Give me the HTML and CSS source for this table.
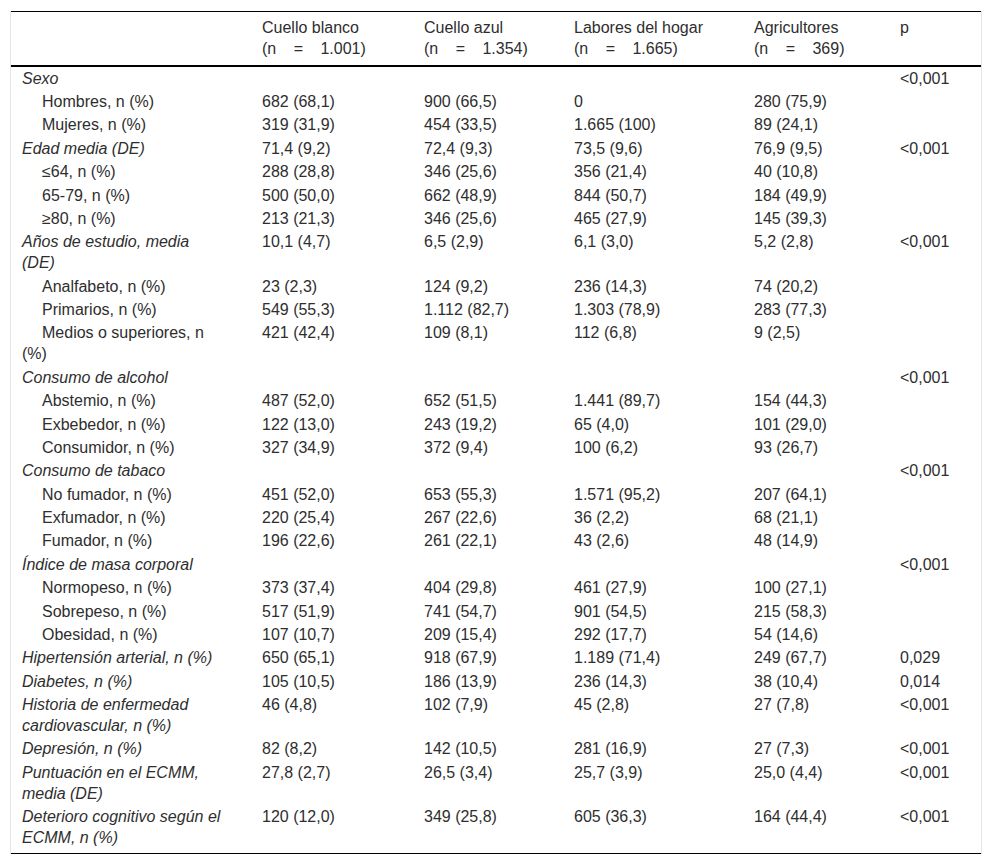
FILE: index.html
```html
<!DOCTYPE html>
<html lang="es">
<head>
<meta charset="utf-8">
<title>Tabla</title>
<link rel="stylesheet" href="styles.css">
</head>
<body>
<div class="wrap">
<table class="tbl">
<colgroup>
<col class="c1"><col class="c2"><col class="c3"><col class="c4"><col class="c5"><col class="c6">
</colgroup>
<thead>
<tr>
<th></th>
<th>Cuello blanco<br><span class="nn">(n = 1.001)</span></th>
<th>Cuello azul<br><span class="nn">(n = 1.354)</span></th>
<th>Labores del hogar<br><span class="nn">(n = 1.665)</span></th>
<th>Agricultores<br><span class="nn">(n = 369)</span></th>
<th>p</th>
</tr>
</thead>
<tbody>
<tr><td class="g">Sexo</td><td></td><td></td><td></td><td></td><td>&lt;0,001</td></tr>
<tr><td class="s">Hombres, n (%)</td><td>682 (68,1)</td><td>900 (66,5)</td><td>0</td><td>280 (75,9)</td><td></td></tr>
<tr><td class="s">Mujeres, n (%)</td><td>319 (31,9)</td><td>454 (33,5)</td><td>1.665 (100)</td><td>89 (24,1)</td><td></td></tr>
<tr><td class="g">Edad media (DE)</td><td>71,4 (9,2)</td><td>72,4 (9,3)</td><td>73,5 (9,6)</td><td>76,9 (9,5)</td><td>&lt;0,001</td></tr>
<tr><td class="s">≤64, n (%)</td><td>288 (28,8)</td><td>346 (25,6)</td><td>356 (21,4)</td><td>40 (10,8)</td><td></td></tr>
<tr><td class="s">65-79, n (%)</td><td>500 (50,0)</td><td>662 (48,9)</td><td>844 (50,7)</td><td>184 (49,9)</td><td></td></tr>
<tr><td class="s">≥80, n (%)</td><td>213 (21,3)</td><td>346 (25,6)</td><td>465 (27,9)</td><td>145 (39,3)</td><td></td></tr>
<tr><td class="g">Años de estudio, media (DE)</td><td>10,1 (4,7)</td><td>6,5 (2,9)</td><td>6,1 (3,0)</td><td>5,2 (2,8)</td><td>&lt;0,001</td></tr>
<tr><td class="s">Analfabeto, n (%)</td><td>23 (2,3)</td><td>124 (9,2)</td><td>236 (14,3)</td><td>74 (20,2)</td><td></td></tr>
<tr><td class="s">Primarios, n (%)</td><td>549 (55,3)</td><td>1.112 (82,7)</td><td>1.303 (78,9)</td><td>283 (77,3)</td><td></td></tr>
<tr><td class="s">Medios o superiores, n (%)</td><td>421 (42,4)</td><td>109 (8,1)</td><td>112 (6,8)</td><td>9 (2,5)</td><td></td></tr>
<tr><td class="g">Consumo de alcohol</td><td></td><td></td><td></td><td></td><td>&lt;0,001</td></tr>
<tr><td class="s">Abstemio, n (%)</td><td>487 (52,0)</td><td>652 (51,5)</td><td>1.441 (89,7)</td><td>154 (44,3)</td><td></td></tr>
<tr><td class="s">Exbebedor, n (%)</td><td>122 (13,0)</td><td>243 (19,2)</td><td>65 (4,0)</td><td>101 (29,0)</td><td></td></tr>
<tr><td class="s">Consumidor, n (%)</td><td>327 (34,9)</td><td>372 (9,4)</td><td>100 (6,2)</td><td>93 (26,7)</td><td></td></tr>
<tr><td class="g">Consumo de tabaco</td><td></td><td></td><td></td><td></td><td>&lt;0,001</td></tr>
<tr><td class="s">No fumador, n (%)</td><td>451 (52,0)</td><td>653 (55,3)</td><td>1.571 (95,2)</td><td>207 (64,1)</td><td></td></tr>
<tr><td class="s">Exfumador, n (%)</td><td>220 (25,4)</td><td>267 (22,6)</td><td>36 (2,2)</td><td>68 (21,1)</td><td></td></tr>
<tr><td class="s">Fumador, n (%)</td><td>196 (22,6)</td><td>261 (22,1)</td><td>43 (2,6)</td><td>48 (14,9)</td><td></td></tr>
<tr><td class="g">Índice de masa corporal</td><td></td><td></td><td></td><td></td><td>&lt;0,001</td></tr>
<tr><td class="s">Normopeso, n (%)</td><td>373 (37,4)</td><td>404 (29,8)</td><td>461 (27,9)</td><td>100 (27,1)</td><td></td></tr>
<tr><td class="s">Sobrepeso, n (%)</td><td>517 (51,9)</td><td>741 (54,7)</td><td>901 (54,5)</td><td>215 (58,3)</td><td></td></tr>
<tr><td class="s">Obesidad, n (%)</td><td>107 (10,7)</td><td>209 (15,4)</td><td>292 (17,7)</td><td>54 (14,6)</td><td></td></tr>
<tr><td class="g">Hipertensión arterial, n (%)</td><td>650 (65,1)</td><td>918 (67,9)</td><td>1.189 (71,4)</td><td>249 (67,7)</td><td>0,029</td></tr>
<tr><td class="g">Diabetes, n (%)</td><td>105 (10,5)</td><td>186 (13,9)</td><td>236 (14,3)</td><td>38 (10,4)</td><td>0,014</td></tr>
<tr><td class="g">Historia de enfermedad cardiovascular, n (%)</td><td>46 (4,8)</td><td>102 (7,9)</td><td>45 (2,8)</td><td>27 (7,8)</td><td>&lt;0,001</td></tr>
<tr><td class="g">Depresión, n (%)</td><td>82 (8,2)</td><td>142 (10,5)</td><td>281 (16,9)</td><td>27 (7,3)</td><td>&lt;0,001</td></tr>
<tr><td class="g">Puntuación en el ECMM, media (DE)</td><td>27,8 (2,7)</td><td>26,5 (3,4)</td><td>25,7 (3,9)</td><td>25,0 (4,4)</td><td>&lt;0,001</td></tr>
<tr class="last"><td class="g">Deterioro cognitivo según el ECMM, n (%)</td><td>120 (12,0)</td><td>349 (25,8)</td><td>605 (36,3)</td><td>164 (44,4)</td><td>&lt;0,001</td></tr>
</tbody>
</table>
</div>
</body>
</html>
```
FILE: styles.css
```css
html, body {
  margin: 0;
  padding: 0;
  background: #fff;
}
body {
  font-family: "Liberation Sans", Arial, sans-serif;
  font-size: 16px;
  color: #2e2e2e;
}
.wrap {
  margin: 11px 10px 0 10px;
  border-left: 1px solid #e4e4e4;
  border-right: 1px solid #e4e4e4;
}
.tbl {
  width: 100%;
  border-collapse: collapse;
  table-layout: fixed;
  line-height: 21px;
}
.c1 { width: 240px; }
.c2 { width: 162px; }
.c3 { width: 150px; }
.c4 { width: 180px; }
.c5 { width: 146px; }
.c6 { width: 92px; }
.tbl thead tr {
  border-top: 1px solid #000;
  border-bottom: 2px solid #000;
}
.tbl th {
  font-weight: normal;
  text-align: left;
  vertical-align: top;
  padding: 4.5px 11px 6px 11px;
}
.nn {
  word-spacing: 13px;
}
.tbl td {
  vertical-align: top;
  padding: 1.2px 11px 1.2px 11px;
}
.tbl td:first-child {
  padding-right: 28px;
}
.tbl td.g {
  font-style: italic;
}
.tbl td.s {
  text-indent: 20px;
}
.tbl tr.last {
  border-bottom: 1px solid #000;
}
.tbl tr.last td {
  padding-bottom: 4.5px;
}
```
